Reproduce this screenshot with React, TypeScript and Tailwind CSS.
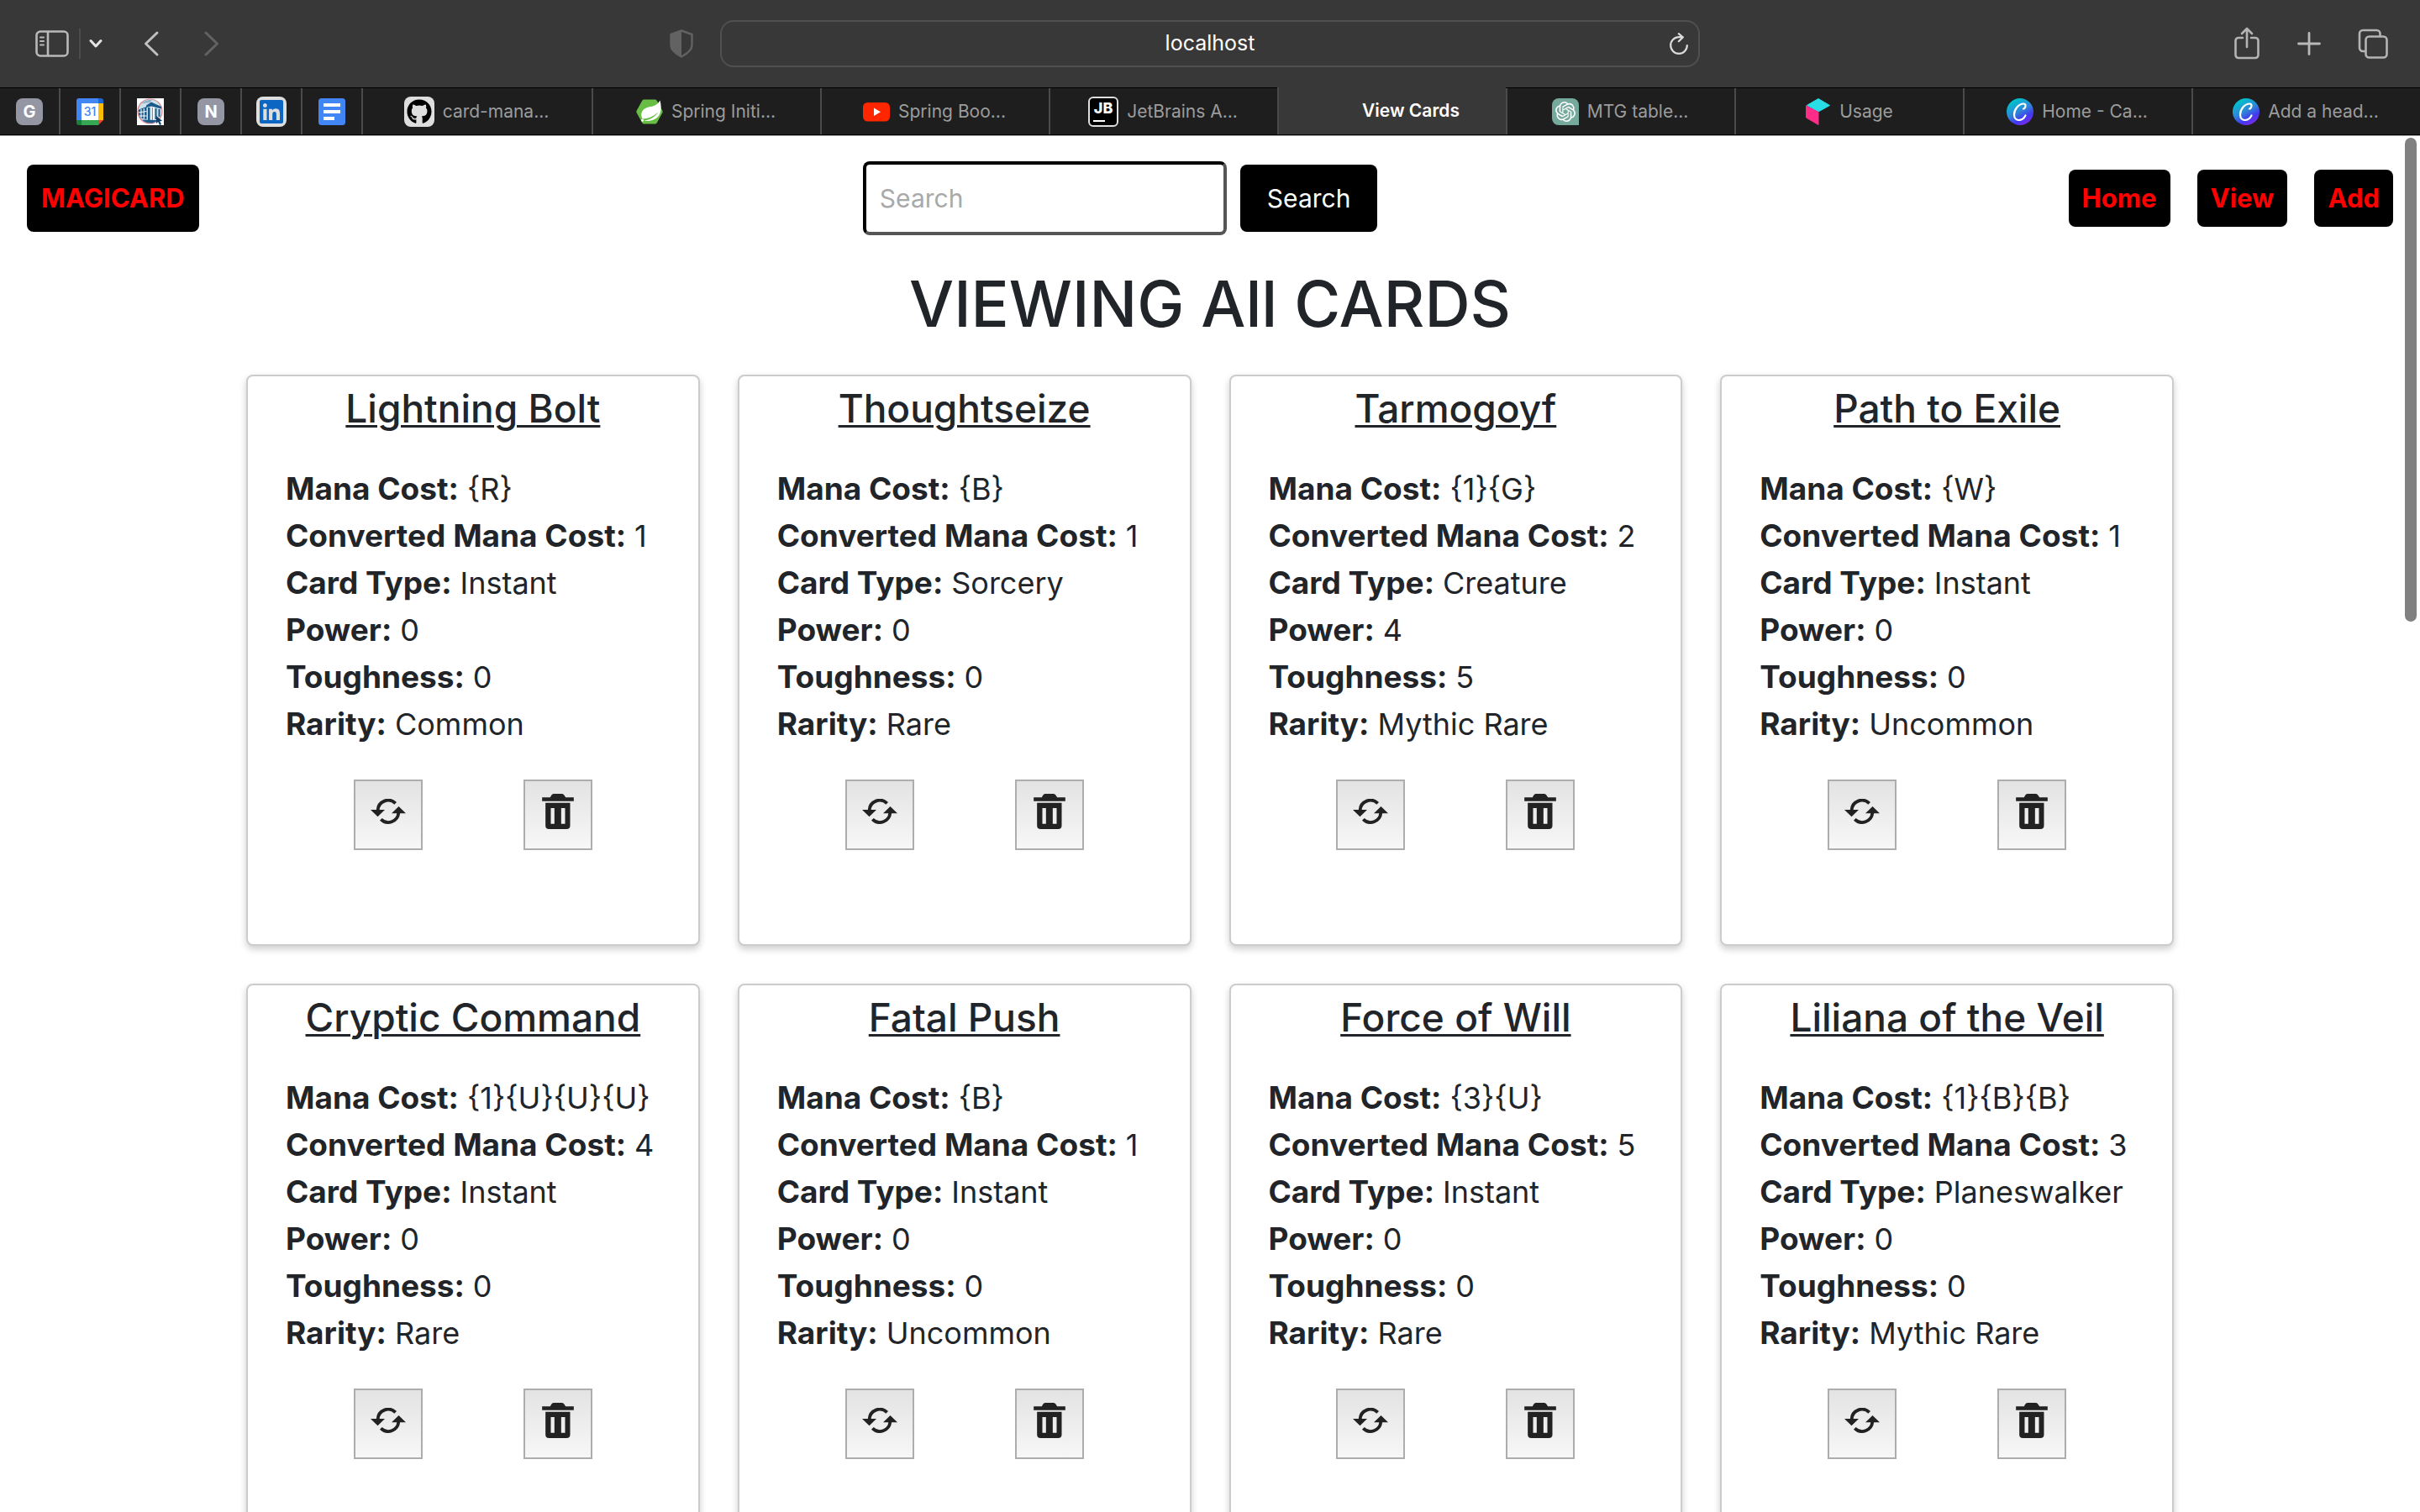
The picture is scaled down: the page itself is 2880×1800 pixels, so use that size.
import type { ReactNode } from "react";
import { FaGithub, FaLinkedin } from "react-icons/fa";
import { SiOpenai } from "react-icons/si";

type Card = {
  name: string;
  manaCost: string;
  convertedManaCost: number;
  type: string;
  power: number;
  toughness: number;
  rarity: string;
};

const cards: Card[] = [
  { name: "Lightning Bolt", manaCost: "{R}", convertedManaCost: 1, type: "Instant", power: 0, toughness: 0, rarity: "Common" },
  { name: "Thoughtseize", manaCost: "{B}", convertedManaCost: 1, type: "Sorcery", power: 0, toughness: 0, rarity: "Rare" },
  { name: "Tarmogoyf", manaCost: "{1}{G}", convertedManaCost: 2, type: "Creature", power: 4, toughness: 5, rarity: "Mythic Rare" },
  { name: "Path to Exile", manaCost: "{W}", convertedManaCost: 1, type: "Instant", power: 0, toughness: 0, rarity: "Uncommon" },
  { name: "Cryptic Command", manaCost: "{1}{U}{U}{U}", convertedManaCost: 4, type: "Instant", power: 0, toughness: 0, rarity: "Rare" },
  { name: "Fatal Push", manaCost: "{B}", convertedManaCost: 1, type: "Instant", power: 0, toughness: 0, rarity: "Uncommon" },
  { name: "Force of Will", manaCost: "{3}{U}", convertedManaCost: 5, type: "Instant", power: 0, toughness: 0, rarity: "Rare" },
  { name: "Liliana of the Veil", manaCost: "{1}{B}{B}", convertedManaCost: 3, type: "Planeswalker", power: 0, toughness: 0, rarity: "Mythic Rare" },
];

/* ---------- Toolbar icons ---------- */

function SidebarIcon() {
  return (
    <svg className="h-8 w-10" viewBox="0 0 40 32" fill="none" stroke="#b9b9b9" strokeWidth="2.6" strokeLinecap="round">
      <rect x="1.5" y="1.5" width="37" height="29" rx="4.5" />
      <path d="M15 2v28" />
      <path d="M6 8.5h4M6 13h4M6 17.5h4" strokeWidth="2" />
    </svg>
  );
}

function ChevronDown() {
  return (
    <svg className="h-4 w-4" viewBox="0 0 16 16" fill="none" stroke="#e4e4e4" strokeWidth="3" strokeLinecap="round" strokeLinejoin="round">
      <path d="M2 4.5 8 11l6-6.5" />
    </svg>
  );
}

function Chevron({ forward = false }: { forward?: boolean }) {
  return (
    <svg className="h-8 w-5" viewBox="0 0 20 32" fill="none" stroke={forward ? "#626262" : "#c0c0c0"} strokeWidth="3" strokeLinecap="round" strokeLinejoin="round">
      <path d={forward ? "M3 3l13.500 13L3 29" : "M17 3 3.500 16 17 29"} />
    </svg>
  );
}

function ShieldIcon() {
  return (
    <svg className="h-9 w-7" viewBox="0 0 28 36">
      <path d="M14 2.500 26.500 7v13c0 5-4 9-12.500 13.500C5.500 29 1.500 25 1.500 20V7z" fill="none" stroke="#626262" strokeWidth="2.4" strokeLinejoin="round" />
      <path d="M14 2 1 7v13c0 5 4 9.500 13 14z" fill="#626262" />
    </svg>
  );
}

function ReloadIcon() {
  return (
    <svg className="h-[26px] w-[22px]" viewBox="0 0 22 26" fill="none" stroke="#dcdcdc" strokeWidth="2.200" strokeLinecap="round" strokeLinejoin="round">
      <path d="M20.800 15A9.800 9.800 0 1 1 11 5.200h4.500" />
      <path d="M10.800 1.200l4.900 4.200-4.900 4.800" />
    </svg>
  );
}

function ShareIcon() {
  return (
    <svg className="h-10 w-8" viewBox="0 0 32 40" fill="none" stroke="#b4b4b4" strokeWidth="2.600" strokeLinecap="round" strokeLinejoin="round">
      <path d="M11 13H6a3.500 3.500 0 0 0-3.500 3.500v17A3.500 3.500 0 0 0 6 37h20a3.500 3.500 0 0 0 3.500-3.500v-17A3.500 3.500 0 0 0 26 13h-5" />
      <path d="M16 24V2.500M10 8l6-6 6 6" />
    </svg>
  );
}

function PlusIcon() {
  return (
    <svg className="h-7 w-7" viewBox="0 0 28 28" stroke="#b9b9b9" strokeWidth="2.800" strokeLinecap="round">
      <path d="M14 1.500v25M1.500 14h25" />
    </svg>
  );
}

function TabsIcon() {
  return (
    <svg className="h-9 w-9" viewBox="0 0 36 36" fill="none" stroke="#b4b4b4" strokeWidth="2.600" strokeLinejoin="round">
      <rect x="9.500" y="9.500" width="25" height="25" rx="4" />
      <path d="M9 27H6a4 4 0 0 1-4-4V6a4 4 0 0 1 4-4h16.500a4 4 0 0 1 4 4v3" />
    </svg>
  );
}

/* ---------- Favicons ---------- */

function LetterIcon({ letter }: { letter: string }) {
  return (
    <span className="flex size-8 items-center justify-center rounded-lg bg-[#9596a3] text-xl font-bold text-white">{letter}</span>
  );
}

function CalendarIcon() {
  return (
    <svg className="size-8" viewBox="0 0 32 32">
      <path d="M3 0h23v6H6v20H0V3a3 3 0 0 1 3-3z" fill="#4285f4" />
      <path d="M26 0h3a3 3 0 0 1 3 3v3h-6z" fill="#1967d2" />
      <path d="M26 6h6v20h-6z" fill="#fbbc04" />
      <path d="M6 26h20v6H6z" fill="#34a853" />
      <path d="M0 26h6v6H3a3 3 0 0 1-3-3z" fill="#188038" />
      <path d="M26 26h6l-6 6z" fill="#ea4335" />
      <path d="M6 6h20v20H6z" fill="#fff" />
      <text x="16" y="21" textAnchor="middle" fontSize="14" fontWeight="500" fill="#4285f4">31</text>
    </svg>
  );
}

function LibraryIcon() {
  return (
    <svg className="size-8" viewBox="0 0 32 32">
      <path d="M0 0h32v32H0z" fill="#fff" />
      <circle cx="15.500" cy="15.500" r="14.500" fill="#cfe0ea" stroke="#d58a8c" strokeWidth="1.200" />
      <path d="M5 6.500C9 2.500 14 1.500 18 2l-3 3z" fill="#8fb2ca" />
      <path d="M11 8.500 17 4.500 29 10v2.500L17 9.500l-6 1.500z" fill="#1b5a8a" />
      <path d="M2 13.500l9.500-3.500v15L4 23.500C2 20 1.500 17 2 13.500z" fill="#1b5a8a" />
      <path d="M5 13v10.500M8.300 12v12.500M2 17l9.500-1.500M3 21h8.500" stroke="#fff" strokeWidth="1.100" />
      <path d="M13 11h2.500v15H13zM21.500 12h2v13h-2zM25.500 13h2v9h-2z" fill="#1b5a8a" />
      <path d="M16.500 10.500h4v15.500h-4z" fill="#fff" />
      <path d="M18.300 11v15" stroke="#1b5a8a" strokeWidth="0.800" />
      <path d="M6 25.500l17 .500v1.500c-5 3-12 3-17-2z" fill="#1b5a8a" />
      <path d="M23 21v9l2.200-2 1.800 4 2-.900-1.800-3.800 3-.300z" fill="#0f4168" />
    </svg>
  );
}

function LinkedinIcon() {
  return (
    <span className="flex size-9 items-center justify-center rounded-lg bg-[#dedede] text-[#0a66c2]">
      <FaLinkedin className="size-8" />
    </span>
  );
}

function DocsIcon() {
  return (
    <svg className="size-8" viewBox="0 0 32 32">
      <rect width="32" height="32" rx="3.500" fill="#4285f4" />
      <path d="M6 6h20v4H6zM6 14h20v4H6zM6 22h13v4H6z" fill="#fff" />
    </svg>
  );
}

function GithubIcon() {
  return (
    <span className="flex size-9 items-center justify-center rounded-lg bg-[#dedede] text-black">
      <FaGithub className="size-[30px]" />
    </span>
  );
}

function SpringIcon() {
  return (
    <svg className="size-8" viewBox="0 0 32 32">
      <path d="M9.500 1.500h13a2.500 2.500 0 0 1 2.200 1.200l6.500 11.800a3 3 0 0 1 0 3l-6.500 11.800a2.500 2.500 0 0 1-2.200 1.200h-13a2.500 2.500 0 0 1-2.200-1.200L.800 17.500a3 3 0 0 1 0-3L7.300 2.700a2.500 2.500 0 0 1 2.200-1.200z" fill="#68bd45" />
      <path d="M28.500 2.500c1.500 6 2 12-1 17.500-3.500 6-11 7.500-18.500 7 8-1.500 14-5 17.500-11C22 21 15.500 24 7.500 24.500 4.500 19 7 13 13 11c5-1.700 11-.500 15.500-8.500z" fill="#fff" />
      <circle cx="7.500" cy="26.300" r="1.500" fill="#fff" />
    </svg>
  );
}

function YoutubeIcon() {
  return (
    <svg className="size-8" viewBox="0 0 32 32">
      <rect y="5" width="32" height="22.500" rx="5.500" fill="#ff2600" />
      <path d="M13 11.500v9.500l8-4.750z" fill="#fff" />
    </svg>
  );
}

function JetbrainsIcon() {
  return (
    <span className="flex size-9 flex-col justify-between rounded-md border-2 border-[#dedede] bg-black px-1 pt-1 pb-1">
      <span className="text-lg leading-4 font-extrabold text-white">JB</span>
      <span className="h-[2px] w-[14px] bg-white" />
    </span>
  );
}

function OpenaiIcon() {
  return (
    <span className="flex size-8 items-center justify-center rounded-t-lg rounded-bl-lg bg-[#74a99b] text-white">
      <SiOpenai className="size-6" />
    </span>
  );
}

function CubeIcon() {
  return (
    <svg className="size-8" viewBox="0 0 32 32">
      <path d="M17 .500 30.500 8.500 17 16 3.500 8.300z" fill="#2adce5" stroke="#2adce5" strokeLinejoin="round" />
      <path d="M2.500 8.800 17 16.500v15L2.500 23z" fill="#ff2d87" stroke="#ff2d87" strokeLinejoin="round" />
    </svg>
  );
}

function CanvaIcon() {
  return (
    <svg className="size-8" viewBox="0 0 32 32">
      <defs>
        <linearGradient id="canva" x1="0.200" y1="0.100" x2="0.700" y2="1">
          <stop offset="0" stopColor="#00c4cc" />
          <stop offset="0.450" stopColor="#2f86d8" />
          <stop offset="0.750" stopColor="#4338f0" />
          <stop offset="1" stopColor="#7d2ae8" />
        </linearGradient>
      </defs>
      <circle cx="16" cy="16" r="16" fill="url(#canva)" />
      <path
        d="M20 12.500c2.500-.500 4-6 .300-6C14 6.500 9 13.500 9 19.500c0 4 2.500 6.500 5.500 6.500 3.500 0 6.500-2.500 8-5.500"
        fill="none"
        stroke="#fff"
        strokeWidth="2.200"
        strokeLinecap="round"
      />
    </svg>
  );
}

/* ---------- Browser chrome ---------- */

const pinned: { label: string; icon: ReactNode }[] = [
  { label: "G", icon: <LetterIcon letter="G" /> },
  { label: "Calendar", icon: <CalendarIcon /> },
  { label: "Library", icon: <LibraryIcon /> },
  { label: "N", icon: <LetterIcon letter="N" /> },
  { label: "LinkedIn", icon: <LinkedinIcon /> },
  { label: "Docs", icon: <DocsIcon /> },
];

const tabs: { title: string; icon: ReactNode; active?: boolean }[] = [
  { title: "card-mana...", icon: <GithubIcon /> },
  { title: "Spring Initi...", icon: <SpringIcon /> },
  { title: "Spring Boo...", icon: <YoutubeIcon /> },
  { title: "JetBrains A...", icon: <JetbrainsIcon /> },
  { title: "View Cards", icon: <span className="size-9" />, active: true },
  { title: "MTG table...", icon: <OpenaiIcon /> },
  { title: "Usage", icon: <CubeIcon /> },
  { title: "Home - Ca...", icon: <CanvaIcon /> },
  { title: "Add a head...", icon: <CanvaIcon /> },
];

function Toolbar() {
  return (
    <div className="grid h-[104px] grid-cols-[1fr_1166px_1fr] items-center bg-[#383838]">
      <div className="flex items-center justify-between pr-8 pl-[42px]">
        <div className="flex items-center">
          <button aria-label="Sidebar"><SidebarIcon /></button>
          <span className="ml-3 h-9 w-[2px] bg-[#4c4c4c]" />
          <button aria-label="Tab groups" className="ml-[10px]"><ChevronDown /></button>
          <button aria-label="Back" className="ml-12"><Chevron /></button>
          <button aria-label="Forward" className="ml-[52px]"><Chevron forward /></button>
        </div>
        <button aria-label="Privacy report"><ShieldIcon /></button>
      </div>
      <div className="flex h-14 items-center rounded-2xl border-2 border-[#505050] pr-3 pl-[34px]">
        <input
          aria-label="Address"
          defaultValue="localhost"
          className="min-w-0 flex-1 bg-transparent text-center text-[25px] text-white outline-none"
        />
        <button aria-label="Reload"><ReloadIcon /></button>
      </div>
      <div className="flex items-center justify-end gap-11 pr-[38px]">
        <button aria-label="Share"><ShareIcon /></button>
        <button aria-label="New tab"><PlusIcon /></button>
        <button aria-label="Tab overview"><TabsIcon /></button>
      </div>
    </div>
  );
}

function TabStrip() {
  return (
    <div className="flex h-[58px] border-b border-[#a8a8a8] bg-[#1e1e1e]">
      {pinned.map((p) => (
        <button key={p.label} aria-label={p.label} className="flex w-[72px] border-y border-black">
          <span className="flex h-full flex-1 items-center justify-center">{p.icon}</span>
          <span className="h-full w-[2px] bg-[#4a4a4a]" />
        </button>
      ))}
      {tabs.map((t, i) => (
        <button
          key={t.title}
          className={
            t.active
              ? "flex flex-1 border-b border-black bg-[#383838] text-white"
              : "flex flex-1 border-y border-black text-[#9c9c9c]"
          }
        >
          {i > 0 && <span className="h-full w-[2px] bg-[#4a4a4a]" />}
          <span className="flex h-full flex-1 items-center justify-center gap-[10px] pr-[2px]">
            {t.icon}
            <span className={t.active ? "text-[21px] font-semibold" : "text-[21px]"}>{t.title}</span>
          </span>
        </button>
      ))}
    </div>
  );
}

/* ---------- Page ---------- */

function Header() {
  return (
    <header className="flex items-center justify-between px-8 pt-[30px]">
      <a href="#" className="flex h-20 items-center rounded-lg bg-black px-[17px] text-[31px] font-bold text-[#ff0000]">
        MAGICARD
      </a>
      <form className="mr-8 flex items-center gap-4" onSubmit={(e) => e.preventDefault()}>
        <input
          type="search"
          aria-label="Search"
          placeholder="Search"
          className="h-[88px] w-[433px] rounded-lg border-4 border-t-black border-r-[#555555] border-b-[#555555] border-l-black bg-white px-4 text-[30px] outline-none placeholder:text-[#a9a9a9]"
        />
        <button className="h-20 rounded-lg bg-black px-8 text-[30px] text-white">Search</button>
      </form>
      <nav className="flex gap-8">
        {["Home", "View", "Add"].map((label) => (
          <a key={label} href="#" className="flex h-[68px] items-center rounded-lg bg-black px-4 text-[31px] font-bold text-[#ff0000]">
            {label}
          </a>
        ))}
      </nav>
    </header>
  );
}

function RefreshGlyph() {
  return (
    <svg className="h-[30px] w-[42px]" viewBox="123 153 126 90">
      <path d="M149 194a37 37 0 0 1 63-25M160 226a37 37 0 0 0 63-23" fill="none" stroke="#222" strokeWidth="11.500" />
      <path d="M123 192h51l-25.500 25zM198 205h51l-25.500-25z" fill="#222" />
    </svg>
  );
}

function TrashGlyph() {
  return (
    <svg className="h-[42px] w-[38px]" viewBox="733 135 113 126" fill="#222">
      <path d="M733 148h29l4-8q3-5 8-5h30q5 0 8 5l5 8h29v13H733z" />
      <path fillRule="evenodd" d="M745 167h88v81q0 13-13 13h-62q-13 0-13-13zM764 186v56h13v-56zM801 186v56h14v-56z" />
    </svg>
  );
}

function IconButton({ label, children }: { label: string; children: ReactNode }) {
  return (
    <button
      aria-label={label}
      className="flex h-[84px] w-[82px] items-center justify-center border-2 border-[#adadad] bg-linear-to-b from-[#e3e3e3] to-[#f7f7f7] pb-2"
    >
      {children}
    </button>
  );
}

function CardPanel({ card }: { card: Card }) {
  const rows: [string, string | number][] = [
    ["Mana Cost:", card.manaCost],
    ["Converted Mana Cost:", card.convertedManaCost],
    ["Card Type:", card.type],
    ["Power:", card.power],
    ["Toughness:", card.toughness],
    ["Rarity:", card.rarity],
  ];
  return (
    <article className="min-h-[680px] rounded-lg border-2 border-[#cccccc] bg-white pt-2 shadow-[0_4px_8px_rgba(0,0,0,0.2)]">
      <h2 className="text-center text-[46px] leading-[60px] font-medium underline decoration-[3px] underline-offset-[3px]">{card.name}</h2>
      <dl className="mt-[38px] pl-[45px] text-4xl leading-[56px] whitespace-nowrap">
        {rows.map(([label, value]) => (
          <div key={label} className="flex gap-[10px]">
            <dt className="text-[37px] leading-[56px] font-bold">{label}</dt>
            <dd>{value}</dd>
          </div>
        ))}
      </dl>
      <div className="mt-[38px] flex justify-center gap-[120px]">
        <IconButton label={`Update ${card.name}`}><RefreshGlyph /></IconButton>
        <IconButton label={`Delete ${card.name}`}><TrashGlyph /></IconButton>
      </div>
    </article>
  );
}

export default function App() {
  return (
    <div className="flex h-screen flex-col overflow-hidden bg-white font-['Inter',sans-serif] text-[#212529]">
      <Toolbar />
      <TabStrip />
      <div className="relative min-h-0 flex-1 overflow-hidden">
        <Header />
        <main>
          <h1 className="mt-[34px] mb-9 text-center text-[75px] leading-[96px] font-medium">VIEWING All CARDS</h1>
          <div className="mx-auto grid w-4/5 grid-cols-4 gap-[45px] px-[5px]">
            {cards.map((card) => (
              <CardPanel key={card.name} card={card} />
            ))}
          </div>
        </main>
        <div className="absolute top-[2px] right-1 h-[576px] w-[14px] rounded-full bg-[#808080]" />
      </div>
    </div>
  );
}
